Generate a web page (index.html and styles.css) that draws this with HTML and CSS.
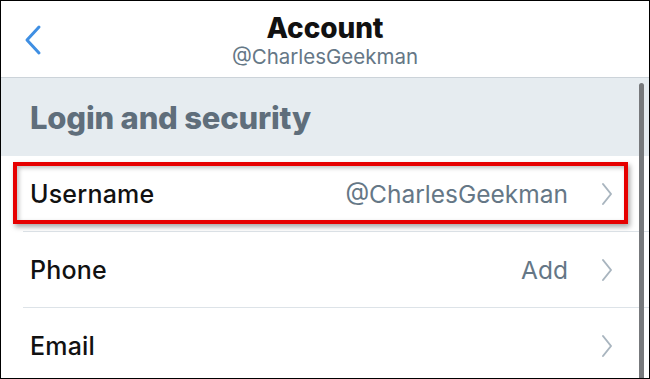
FILE: index.html
```html
<!DOCTYPE html>
<html lang="en">

<head>
    <meta charset="UTF-8">
    <meta name="viewport" content="width=device-width, initial-scale=1.0">
    <title>Account</title>
    <link rel="stylesheet" href="styles.css">
</head>

<body>
    <div class="screen">
        <div class="nav">
            <div class="back">
                <svg width="20" height="32" viewBox="0 0 20 32">
                    <path d="M15 3 L3 16 L15 29" fill="none" stroke="#3f8fe3" stroke-width="3" stroke-linecap="round" stroke-linejoin="round"/>
                </svg>
            </div>
            <div class="nav-title">
                <div class="title">Account</div>
                <div class="subtitle">@CharlesGeekman</div>
            </div>
            <div></div>
        </div>
        <div class="content">
            <div class="section-head">Login and security</div>
            <div class="row highlighted">
                <div class="row-inner">
                    <div class="label">Username</div>
                    <div class="value">@CharlesGeekman</div>
                    <svg class="chevron" width="12" height="24" viewBox="0 0 12 24">
                        <path d="M2 2 L10 12 L2 22" fill="none" stroke="#a9b5bf" stroke-width="2" stroke-linecap="round" stroke-linejoin="round"/>
                    </svg>
                </div>
            </div>
            <div class="row">
                <div class="row-inner">
                    <div class="label">Phone</div>
                    <div class="value">Add</div>
                    <svg class="chevron" width="12" height="24" viewBox="0 0 12 24">
                        <path d="M2 2 L10 12 L2 22" fill="none" stroke="#a9b5bf" stroke-width="2" stroke-linecap="round" stroke-linejoin="round"/>
                    </svg>
                </div>
            </div>
            <div class="row">
                <div class="row-inner">
                    <div class="label">Email</div>
                    <div class="value"></div>
                    <svg class="chevron" width="12" height="24" viewBox="0 0 12 24">
                        <path d="M2 2 L10 12 L2 22" fill="none" stroke="#a9b5bf" stroke-width="2" stroke-linecap="round" stroke-linejoin="round"/>
                    </svg>
                </div>
            </div>
            <div class="scrollbar"></div>
        </div>
    </div>
</body>

</html>
```

FILE: styles.css
```css
body {
    margin: 0;
    font-family: 'Inter', 'Liberation Sans', sans-serif;
    background-color: white;
}

.screen {
    width: 650px;
    height: 379px;
    box-sizing: border-box;
    border: 1px solid black;
    overflow: hidden;
    background-color: white;
}

.nav {
    display: grid;
    grid-template-columns: 1fr auto 1fr;
    align-items: center;
    height: 76px;
    border-bottom: 1px solid #ccd3d9;
}

.back {
    padding-left: 23px;
    padding-top: 2px;
    display: flex;
}

.nav-title {
    text-align: center;
    padding-top: 2px;
}

.title {
    font-size: 28px;
    font-weight: 800;
    color: #111;
    line-height: 34px;
    letter-spacing: -0.1px;
}

.subtitle {
    font-size: 20.5px;
    color: #657786;
    line-height: 24px;
}

.content {
    position: relative;
}

.section-head {
    height: 78px;
    background-color: #e6ecf0;
    display: flex;
    align-items: center;
    padding-left: 29px;
    font-size: 31px;
    font-weight: 800;
    color: #5f6e7b;
    letter-spacing: -0.2px;
}

.row {
    position: relative;
    height: 76px;
    padding-left: 22px;
}

.row-inner {
    display: flex;
    align-items: center;
    height: 100%;
    box-sizing: border-box;
    border-bottom: 1px solid #dde3e8;
    padding-left: 7px;
    padding-right: 36px;
}

.label {
    font-size: 25px;
    font-weight: 500;
    color: #111;
    flex: 1;
    letter-spacing: 0.2px;
}

.value {
    font-size: 24.5px;
    color: #657786;
    margin-right: 33px;
}

.chevron {
    display: block;
}

.highlighted::after {
    content: '';
    position: absolute;
    top: 6px;
    bottom: 8px;
    left: 12px;
    right: 21px;
    border: 4px solid #e60000;
    box-shadow: 2px 3px 5px rgba(0, 0, 0, 0.35), inset 2px 2px 4px rgba(0, 0, 0, 0.25);
}

.scrollbar {
    position: absolute;
    top: 5px;
    right: 5px;
    width: 5px;
    height: 320px;
    border-radius: 3px;
    background-color: #77797c;
}
```
